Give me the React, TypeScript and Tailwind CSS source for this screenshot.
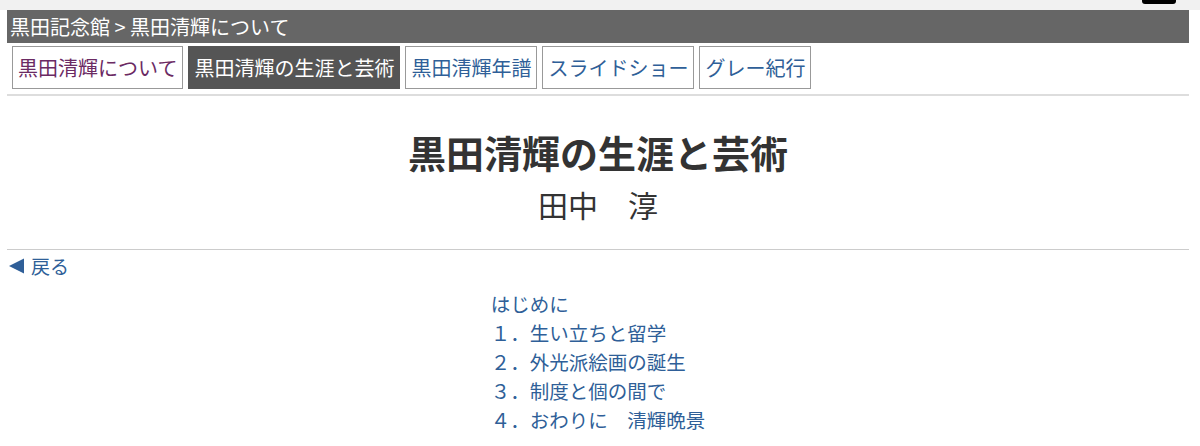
import React from "react";

const tabs = [
  { label: "黒田清輝について", state: "visited" },
  { label: "黒田清輝の生涯と芸術", state: "current" },
  { label: "黒田清輝年譜", state: "link" },
  { label: "スライドショー", state: "link" },
  { label: "グレー紀行", state: "link" },
];

const contents = [
  "はじめに",
  "１．生い立ちと留学",
  "２．外光派絵画の誕生",
  "３．制度と個の間で",
  "４．おわりに　清輝晩景",
];

export default function App() {
  return (
    <div
      className="w-full h-[446px] overflow-hidden bg-white"
      style={{ fontFamily: '"Noto Sans CJK JP", "Noto Sans", sans-serif' }}
    >
      {/* top browser strip */}
      <div className="h-[10px] bg-[#f1f1f1] flex justify-end">
        <div className="w-[34px] h-[4px] bg-black rounded-b-[3px] mr-[24px]" />
      </div>

      <div className="ml-[7px] mr-[11px]">
        {/* breadcrumb */}
        <div className="h-[33px] bg-[#666666] text-white text-[20px] leading-[33px] pl-[3px]">
          黒田記念館 &gt; 黒田清輝について
        </div>

        {/* section tabs */}
        <nav className="flex gap-[5px] pl-[5px] pt-[3px] pb-[5px]">
          {tabs.map((t) => (
            <a
              key={t.label}
              className={
                t.state === "current"
                  ? "h-[43px] px-[5px] border border-[#555] bg-[#555555] text-white text-[20px] leading-[41px] whitespace-nowrap"
                  : t.state === "visited"
                  ? "h-[43px] px-[5px] border border-[#999] bg-white text-[#6b2a63] text-[20px] leading-[41px] whitespace-nowrap"
                  : "h-[43px] px-[5px] border border-[#999] bg-white text-[#2f5f98] text-[20px] leading-[41px] whitespace-nowrap"
              }
            >
              {t.label}
            </a>
          ))}
        </nav>
        <div className="h-[2px] bg-[#dddddd]" />

        {/* heading */}
        <div className="text-center text-[#333333]">
          <h1 className="mt-[30px] text-[38px] font-bold leading-[52px]">
            黒田清輝の生涯と芸術
          </h1>
          <p className="mt-[4px] text-[30px] leading-[44px]">田中　淳</p>
        </div>
        <div className="mt-[23px] h-px bg-[#cccccc]" />

        {/* back link */}
        <a className="flex items-center gap-[6px] mt-[4px] pl-[2px] text-[19px] leading-[24px] text-[#2f5f98]">
          <svg width="16" height="16" viewBox="0 0 16 16" className="shrink-0">
            <polygon points="0,8 15,0.5 15,15.5" fill="#2f5f98" />
          </svg>
          <span>戻る</span>
        </a>

        {/* table of contents */}
        <div className="flex justify-center mt-[11px]">
          <ul className="text-left text-[19.5px] leading-[29px] text-[#2f5f98]">
            {contents.map((c) => (
              <li key={c} className="whitespace-pre">
                {c}
              </li>
            ))}
          </ul>
        </div>
      </div>
    </div>
  );
}
